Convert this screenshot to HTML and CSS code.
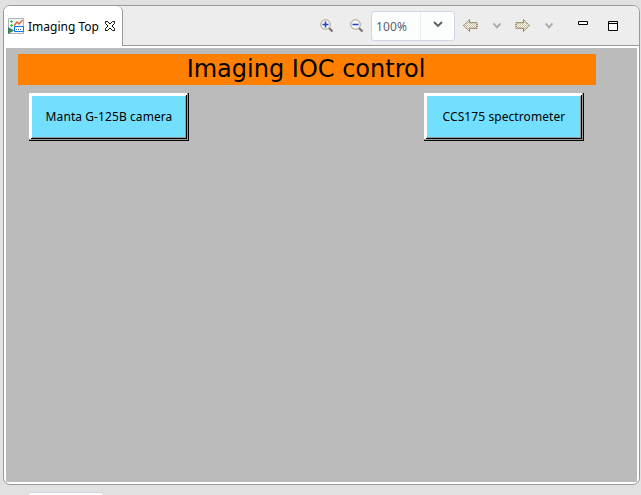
FILE: index.html
```
<!DOCTYPE html>
<html lang="en">
<head>
<meta charset="utf-8">
<title>Imaging Top</title>
<link rel="stylesheet" href="styles.css">
</head>
<body>
<section class="panel">
  <header class="bar">
    <div class="tab">
      <svg class="file-icon" width="16" height="16" viewBox="0 0 16 16">
        <path d="M.5.5h15v15H.5z" fill="#f4f6f7" stroke="#b2b2b2"/>
        <path d="M2 3.500h3M3.500 2v3M2 7.500h3M3.500 6v3" stroke="#18df24"/>
        <path d="M6 7.500L9 4l2 2 3.500-4" fill="none" stroke="#e0602c" stroke-width="1.200"/>
        <path d="M6.500 8.500h9v5h-9z" fill="#fff" stroke="#0878ee"/>
        <path d="M8 11.500h6" stroke="#567" stroke-dasharray="1 1"/>
        <path d="M0 9l6 3.500L0 16z" fill="#328455"/>
      </svg>
      <span class="tab-label">Imaging Top</span>
      <svg class="close" width="10" height="10" viewBox="0 0 10 10">
        <path d="M.5.5h2L5 3 7.500.5h2v2L7 5l2.500 2.500v2h-2L5 7 2.500 9.500h-2v-2L3 5 .5 2.500z" fill="#fff" stroke="#111"/>
      </svg>
    </div>
    <div class="tools">
      <svg class="zoom-in" width="14" height="14" viewBox="0 0 14 14">
        <path d="M9 9l3.500 3.500" stroke="#77736b" stroke-width="2.200"/>
        <circle cx="5.500" cy="5.500" r="4.800" fill="#f2f6ff" stroke="#a69c80"/>
        <path d="M2.500 5.500h6M5.500 2.500v6" stroke="#2440b4" stroke-width="1.500"/>
      </svg>
      <svg class="zoom-out" width="14" height="14" viewBox="0 0 14 14">
        <path d="M9 9l3.500 3.500" stroke="#77736b" stroke-width="2.200"/>
        <circle cx="5.500" cy="5.500" r="4.800" fill="#f2f6ff" stroke="#a69c80"/>
        <path d="M2.500 5.500h6" stroke="#2440b4" stroke-width="1.500"/>
      </svg>
      <div class="combo">
        <span class="combo-value">100%</span>
        <span class="combo-drop"><svg width="10" height="7" viewBox="0 0 10 7"><path d="M1 1l4 4 4-4" fill="none" stroke="#565b66" stroke-width="1.800"/></svg></span>
      </div>
      <svg class="back" width="15" height="13" viewBox="0 0 15 13">
        <defs>
          <pattern id="dither" width="2" height="2" patternUnits="userSpaceOnUse">
            <path d="M0 0h2v2H0z" fill="#fbf9f0"/>
            <path d="M0 0h1v1H0zM1 1h1v1H1z" fill="#c9c3ae"/>
          </pattern>
        </defs>
        <path d="M.7 6.500L6.500.7v3h7.500v5.600H6.500v3z" fill="url(#dither)" stroke="#c9bfa8"/>
        <path d="M.7 6.500L6.500.7v3h7.500v5.600H6.500v3z" fill="none" stroke="#76521d" stroke-dasharray="1 1"/>
      </svg>
      <svg class="chevron" width="8" height="6" viewBox="0 0 8 6"><path d="M.5.500L4 4.300 7.500.5" fill="none" stroke="#a7a8af" stroke-width="1.900"/></svg>
      <svg class="forward" width="15" height="13" viewBox="0 0 15 13">
        <path d="M14.300 6.500L8.500.7v3H1v5.600h7.500v3z" fill="url(#dither)" stroke="#c9bfa8"/>
        <path d="M14.300 6.500L8.500.7v3H1v5.600h7.500v3z" fill="none" stroke="#76521d" stroke-dasharray="1 1"/>
      </svg>
      <svg class="chevron" width="8" height="6" viewBox="0 0 8 6"><path d="M.5.500L4 4.300 7.500.5" fill="none" stroke="#a7a8af" stroke-width="1.900"/></svg>
      <svg class="minimize" width="10" height="4" viewBox="0 0 10 4"><path d="M.5.5h9v3h-9z" fill="#fff" stroke="#000"/></svg>
      <svg class="maximize" width="10" height="10" viewBox="0 0 10 10"><path d="M.5.5h9v9h-9zM0 2.500h10" fill="#fff" stroke="#000"/></svg>
    </div>
  </header>
  <main class="canvas">
    <h1 class="title"><span>Imaging IOC control</span></h1>
    <div class="actions">
      <button class="action">Manta G-125B camera</button>
      <button class="action">CCS175 spectrometer</button>
    </div>
  </main>
</section>
<div class="next-panel"></div>
</body>
</html>
```
FILE: styles.css
```
* { box-sizing: border-box; }

body {
  margin: 0;
  height: 495px;
  padding: 5px 1px 0 3px;
  overflow: hidden;
  background: #e1e1e1;
  font-family: "Noto Sans", sans-serif;
  font-size: 12px;
  color: #000;
}

svg { display: block; flex: none; }

.panel {
  height: 480px;
  border: 1px solid #999;
  border-radius: 7px;
  background: #fff;
  overflow: hidden;
}

.bar { display: flex; height: 40px; background: #ededed; }

.tab {
  display: flex;
  align-items: center;
  width: 119px;
  flex: none;
  padding: 0 0 0 4px;
  border-right: 1px solid #999;
  border-top-right-radius: 6px;
  background: #fff;
}

.tab-label { margin-left: 4px; width: 71px; white-space: nowrap; }
.close { margin: 0 0 1px 6px; }

.tools {
  display: flex;
  align-items: center;
  flex: 1;
  padding-left: 197px;
  border-bottom: 1px solid #999;
}

.zoom-out { margin-left: 16px; }

.combo {
  display: flex;
  width: 84px;
  height: 30px;
  margin-left: 7px;
  border: 1px solid #cfd6e6;
  border-radius: 3px;
  background: #fcfefe;
  color: #5c616c;
}

.combo-value {
  width: 49px;
  padding-left: 4px;
  line-height: 29px;
  letter-spacing: .15px;
  border-right: 1px solid #e8edf4;
}

.combo-drop { display: flex; flex: 1; align-items: center; justify-content: center; padding: 0 0 2px 1px; }

.back { margin-left: 8px; }
.chevron { margin-left: 15px; }
.forward { margin-left: 14px; }
.minimize { margin: 0 0 5px 25px; }
.maximize { margin-left: 20px; }

.canvas {
  height: 434px;
  margin: 2px 2px 0;
  padding: 6px 0 0 12px;
  background: #bbb;
}

.title {
  display: flex;
  justify-content: center;
  width: 578px;
  height: 31px;
  margin: 0;
  padding-right: 2px;
  background: #ff8000;
  font: 24px/30px "DejaVu Sans", sans-serif;
  white-space: nowrap;
}

.actions {
  display: flex;
  gap: 235px;
  margin: 8px 0 0 11px;
}

.action {
  width: 160px;
  height: 48px;
  padding: 0;
  border: 0;
  background: #73dfff;
  box-shadow:
    inset -1px -1px #000,
    inset -2px -2px #999,
    inset 2px 2px #fff,
    inset -3px -3px #000,
    inset 3px 3px #fff,
    inset -4px -4px #999;
  font: 12px/16px "Noto Sans", sans-serif;
  letter-spacing: .08px;
  color: #000;
  white-space: nowrap;
}

.next-panel {
  width: 76px;
  height: 10px;
  margin: 7px 0 0 25px;
  border: 1px solid #cfd6e6;
  border-radius: 3px 3px 0 0;
  background: #fcfefe;
}
```
